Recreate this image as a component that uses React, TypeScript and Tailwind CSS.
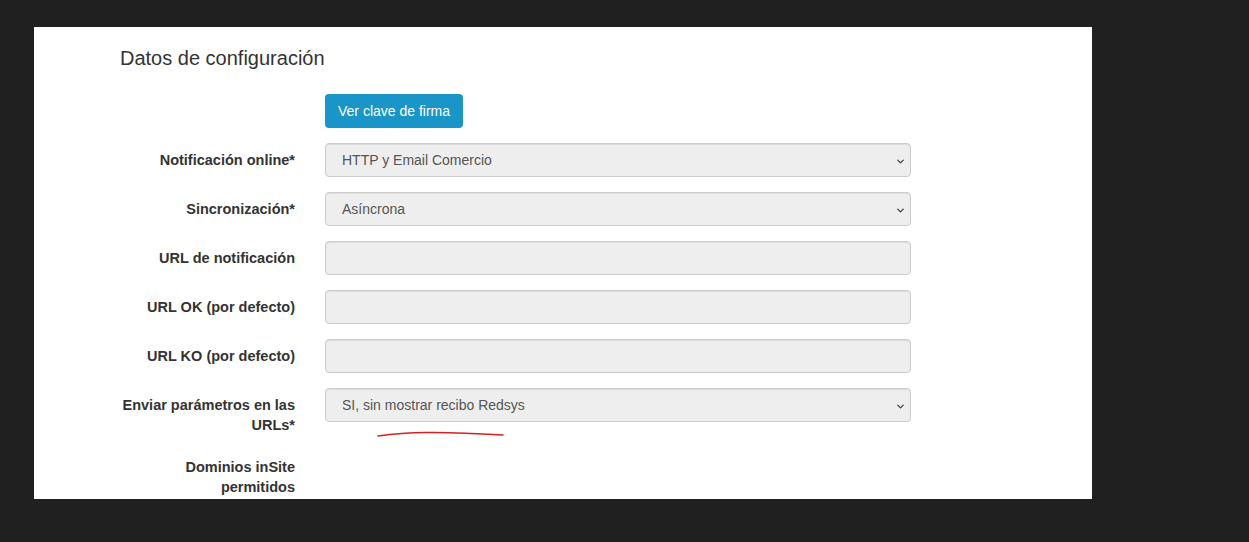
import { ChevronDown } from 'lucide-react';

interface Field {
  readonly label: string[];
  readonly kind: 'select' | 'input' | 'none';
  readonly value?: string;
}

const fields: readonly Field[] = [
  { label: ['Notificación online*'], kind: 'select', value: 'HTTP y Email Comercio' },
  { label: ['Sincronización*'], kind: 'select', value: 'Asíncrona' },
  { label: ['URL de notificación'], kind: 'input' },
  { label: ['URL OK (por defecto)'], kind: 'input' },
  { label: ['URL KO (por defecto)'], kind: 'input' },
  { label: ['Enviar parámetros en las', 'URLs*'], kind: 'select', value: 'SI, sin mostrar recibo Redsys' },
  { label: ['Dominios inSite', 'permitidos'], kind: 'none' },
];

function FieldControl({ field }: { field: Field }) {
  if (field.kind === 'none') return null;
  return (
    <div className="relative w-[586px] h-[34px] rounded-[4px] border border-[#cccccc] bg-[#eeeeee] shadow-[inset_0_1px_1px_rgba(0,0,0,0.075)] flex items-center pl-[16px] text-[14px] text-[#555555]">
      {field.value}
      {field.kind === 'select' && (
        <ChevronDown className="absolute right-[4px] top-[12px] w-[11px] h-[11px] text-[#444]" strokeWidth={3} />
      )}
    </div>
  );
}

export default function App() {
  return (
    <div className="w-[1249px] h-[542px] bg-[#202020] pt-[27px] pl-[34px] overflow-hidden font-['Liberation_Sans',Arial,sans-serif]">
      <div className="relative w-[1058px] h-[472px] bg-white overflow-hidden pl-[86px] pt-[20px]">
        <h3 className="text-[20px] leading-[22px] text-[#333333]">Datos de configuración</h3>
        <div className="mt-[25px] flex">
          <div className="w-[205px]" />
          <button className="h-[34px] px-[13px] rounded-[4px] bg-[#1a95c8] text-white text-[14px]">
            Ver clave de firma
          </button>
        </div>
        <div className="mt-[15px] flex flex-col gap-[15px]">
          {fields.map((f) => (
            <div key={f.label.join(' ')} className="flex items-start gap-[30px]">
              <div className="w-[175px] shrink-0 pt-[7px] text-right text-[14.5px] leading-[20px] font-bold text-[#333333]">
                {f.label.map((l) => (
                  <div key={l} className="whitespace-nowrap">{l}</div>
                ))}
              </div>
              <FieldControl field={f} />
            </div>
          ))}
        </div>
        <svg className="absolute left-[343px] top-[402px]" width="130" height="12" viewBox="0 0 130 12">
          <path d="M1 7 C 30 3, 60 2, 126 6" stroke="#d42020" strokeWidth="1.6" fill="none" strokeLinecap="round" />
        </svg>
      </div>
    </div>
  );
}
